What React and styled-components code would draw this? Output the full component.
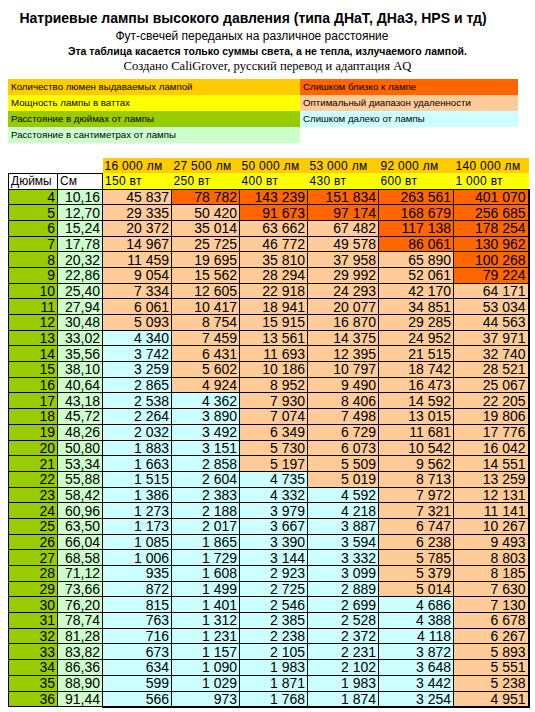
import React from "react";
import styled, { createGlobalStyle } from "styled-components";

const GlobalStyle = createGlobalStyle`
  body {
    margin: 0;
    background: #fff;
    font-family: "Liberation Sans", Arial, sans-serif;
    color: #000;
  }
`;

const colors = {
  lumen: "#ffcc00",
  watt: "#ffff00",
  inch: "#99cc00",
  cm: "#ccffcc",
  hot: "#ff6600",
  ok: "#ffcc99",
  far: "#ccffff",
};

const lamps = [
  { lm: "16 000 лм", w: "150 вт", hot: 3, far: 13 },
  { lm: "27 500 лм", w: "250 вт", hot: 4, far: 17 },
  { lm: "50 000 лм", w: "400 вт", hot: 5, far: 22 },
  { lm: "53 000 лм", w: "430 вт", hot: 5, far: 23 },
  { lm: "92 000 лм", w: "600 вт", hot: 7, far: 30 },
  { lm: "140 000 лм", w: "1 000 вт", hot: 9, far: 99 },
];

const rows = [
  [4, "10,16", "45 837", "78 782", "143 239", "151 834", "263 561", "401 070"],
  [5, "12,70", "29 335", "50 420", "91 673", "97 174", "168 679", "256 685"],
  [6, "15,24", "20 372", "35 014", "63 662", "67 482", "117 138", "178 254"],
  [7, "17,78", "14 967", "25 725", "46 772", "49 578", "86 061", "130 962"],
  [8, "20,32", "11 459", "19 695", "35 810", "37 958", "65 890", "100 268"],
  [9, "22,86", "9 054", "15 562", "28 294", "29 992", "52 061", "79 224"],
  [10, "25,40", "7 334", "12 605", "22 918", "24 293", "42 170", "64 171"],
  [11, "27,94", "6 061", "10 417", "18 941", "20 077", "34 851", "53 034"],
  [12, "30,48", "5 093", "8 754", "15 915", "16 870", "29 285", "44 563"],
  [13, "33,02", "4 340", "7 459", "13 561", "14 375", "24 952", "37 971"],
  [14, "35,56", "3 742", "6 431", "11 693", "12 395", "21 515", "32 740"],
  [15, "38,10", "3 259", "5 602", "10 186", "10 797", "18 742", "28 521"],
  [16, "40,64", "2 865", "4 924", "8 952", "9 490", "16 473", "25 067"],
  [17, "43,18", "2 538", "4 362", "7 930", "8 406", "14 592", "22 205"],
  [18, "45,72", "2 264", "3 890", "7 074", "7 498", "13 015", "19 806"],
  [19, "48,26", "2 032", "3 492", "6 349", "6 729", "11 681", "17 776"],
  [20, "50,80", "1 883", "3 151", "5 730", "6 073", "10 542", "16 042"],
  [21, "53,34", "1 663", "2 858", "5 197", "5 509", "9 562", "14 551"],
  [22, "55,88", "1 515", "2 604", "4 735", "5 019", "8 713", "13 259"],
  [23, "58,42", "1 386", "2 383", "4 332", "4 592", "7 972", "12 131"],
  [24, "60,96", "1 273", "2 188", "3 979", "4 218", "7 321", "11 141"],
  [25, "63,50", "1 173", "2 017", "3 667", "3 887", "6 747", "10 267"],
  [26, "66,04", "1 085", "1 865", "3 390", "3 594", "6 238", "9 493"],
  [27, "68,58", "1 006", "1 729", "3 144", "3 332", "5 785", "8 803"],
  [28, "71,12", "935", "1 608", "2 923", "3 099", "5 379", "8 185"],
  [29, "73,66", "872", "1 499", "2 725", "2 889", "5 014", "7 630"],
  [30, "76,20", "815", "1 401", "2 546", "2 699", "4 686", "7 130"],
  [31, "78,74", "763", "1 312", "2 385", "2 528", "4 388", "6 678"],
  [32, "81,28", "716", "1 231", "2 238", "2 372", "4 118", "6 267"],
  [33, "83,82", "673", "1 157", "2 105", "2 231", "3 872", "5 893"],
  [34, "86,36", "634", "1 090", "1 983", "2 102", "3 648", "5 551"],
  [35, "88,90", "599", "1 029", "1 871", "1 983", "3 442", "5 238"],
  [36, "91,44", "566", "973", "1 768", "1 874", "3 254", "4 951"],
];

const legend = [
  ["Количество люмен выдаваемых лампой", colors.lumen],
  ["Слишком близко к лампе", colors.hot],
  ["Мощность лампы в ваттах", colors.watt],
  ["Оптимальный диапазон удаленности", colors.ok],
  ["Расстояние в дюймах от лампы", colors.inch],
  ["Слишком далеко от лампы", colors.far],
  ["Расстояние в сантиметрах от лампы", colors.cm],
];

const Page = styled.div`
  width: 535px;
  padding: 8px 0 0 8px;
  box-sizing: border-box;
`;

const Heading = styled.header`
  display: flex;
  flex-direction: column;
  align-items: center;
  margin-left: -8px;
  margin-bottom: 5px;
`;

const Title = styled.h1`
  margin: 0;
  padding-right: ${(p) => p.$shift || 0}px;
  font-size: 14px;
  line-height: 20px;
  font-weight: bold;
`;

const Subtitle = styled.div`
  padding-right: ${(p) => p.$shift || 0}px;
  font-size: 12px;
  line-height: 16px;
`;

const Note = styled.div`
  font-size: 10.5px;
  line-height: 14px;
  font-weight: bold;
`;

const Credit = styled.div`
  font-family: "Liberation Serif", "Times New Roman", serif;
  font-size: 12.6px;
  line-height: 16px;
`;

const Legend = styled.div`
  display: grid;
  grid-template-columns: 292px 218px;
  grid-auto-rows: 16px;
  margin-bottom: 15px;
`;

const LegendItem = styled.div`
  background: ${(p) => p.$bg};
  font-size: 9.7px;
  line-height: 16px;
  padding-left: 3px;
  white-space: nowrap;
`;

const Table = styled.table`
  border-collapse: collapse;
  table-layout: fixed;
  width: 520px;
`;

const Row = styled.tr`
  height: ${(p) => p.$h}px;
`;

const LumenCell = styled.td`
  background: ${colors.lumen};
  padding: 0 0 0 2px;
  font-size: 12px;
  letter-spacing: 0.3px;
  white-space: nowrap;
`;

const WattCell = styled.td`
  background: ${colors.watt};
  border-bottom: 1px solid #000;
  padding: 0 0 0 2px;
  font-size: 12px;
  letter-spacing: 0.3px;
  white-space: nowrap;
`;

const UnitCell = styled.td`
  border: 1px solid #000;
  padding: 0 0 0 2px;
  font-size: 12px;
`;

const NumCell = styled.td`
  background: ${(p) => p.$bg};
  border: 1px solid #000;
  border-right-width: ${(p) => (p.$edge ? 2 : 1)}px;
  border-bottom-width: ${(p) => (p.$last ? 2 : 1)}px;
  padding: 1px 2px 0 0;
  text-align: right;
  font-family: "Liberation Sans Narrow", "Liberation Sans", Arial, sans-serif;
  font-size: 14px;
  line-height: 13px;
  white-space: nowrap;
`;

const SideCell = styled(NumCell)`
  border-bottom-width: 1px;
`;

const cellColor = (lamp, inch) =>
  inch <= lamp.hot ? colors.hot : inch >= lamp.far ? colors.far : colors.ok;

export default function App() {
  return (
    <Page>
      <GlobalStyle />
      <Heading>
        <Title $shift={29}>
          Натриевые лампы высокого давления (типа ДНаТ, ДНаЗ, HPS и тд)
        </Title>
        <Subtitle $shift={31}>Фут-свечей переданых на различное расстояние</Subtitle>
        <Note>Эта таблица касается только суммы света, а не тепла, излучаемого лампой.</Note>
        <Credit>Создано CaliGrover, русский перевод и адаптация AQ</Credit>
      </Heading>

      <Legend>
        {legend.map(([text, bg]) => (
          <LegendItem key={text} $bg={bg}>
            {text}
          </LegendItem>
        ))}
      </Legend>

      <Table>
        <colgroup>
          {[49, 45, 69, 68, 68, 71, 75, 75].map((w, i) => (
            <col key={i} style={{ width: w }} />
          ))}
        </colgroup>
        <tbody>
          <Row $h={15}>
            <td />
            <td />
            {lamps.map((l) => (
              <LumenCell key={l.lm}>{l.lm}</LumenCell>
            ))}
          </Row>
          <Row $h={16}>
            <UnitCell>Дюймы</UnitCell>
            <UnitCell>См</UnitCell>
            {lamps.map((l) => (
              <WattCell key={l.w}>{l.w}</WattCell>
            ))}
          </Row>
          {rows.map(([inch, cm, ...vals], r) => {
            const last = r === rows.length - 1;
            return (
              <Row key={inch} $h={15.7}>
                <SideCell $bg={colors.inch}>{inch}</SideCell>
                <SideCell $bg={colors.cm}>{cm}</SideCell>
                {vals.map((v, i) => (
                  <NumCell
                    key={i}
                    $bg={cellColor(lamps[i], inch)}
                    $edge={i === vals.length - 1}
                    $last={last}
                  >
                    {v}
                  </NumCell>
                ))}
              </Row>
            );
          })}
        </tbody>
      </Table>
    </Page>
  );
}
